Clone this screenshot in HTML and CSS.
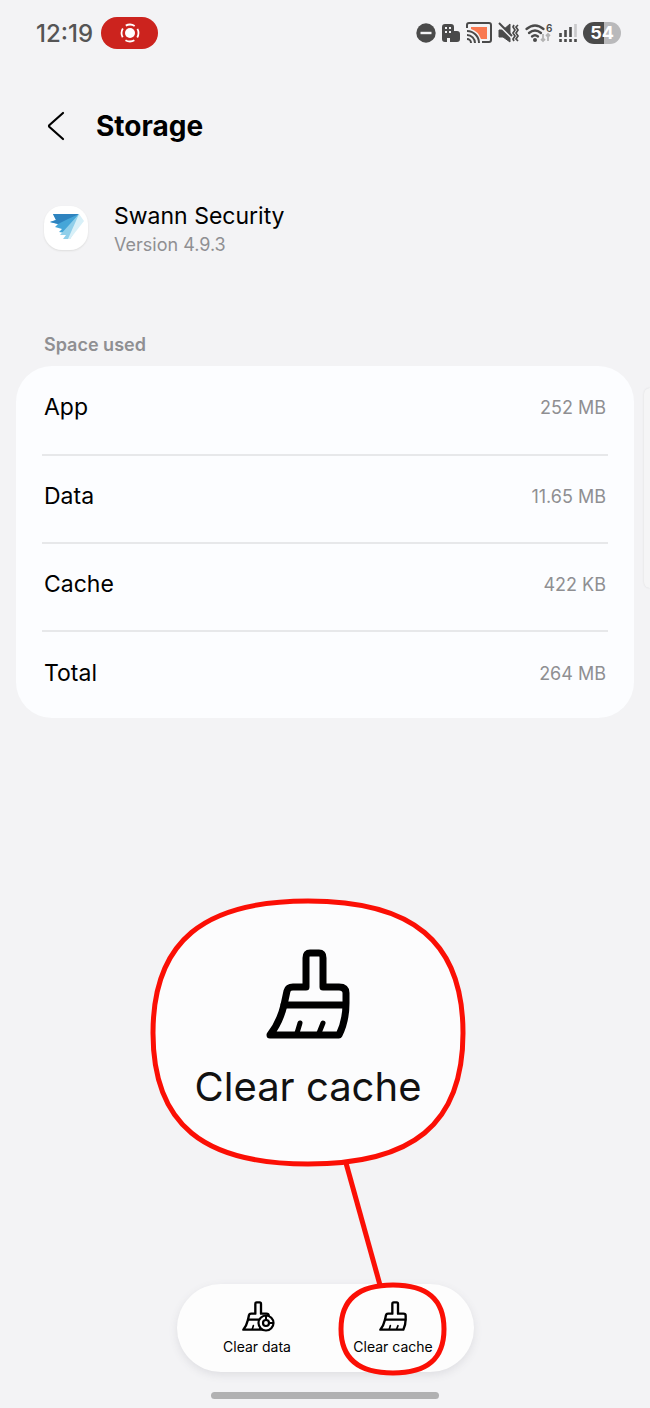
FILE: index.html
```
<!DOCTYPE html>
<html lang="en">
<head>
    <meta charset="UTF-8">
    <meta name="viewport" content="width=device-width, initial-scale=1.0">
    <title>Storage</title>
    <link rel="stylesheet" href="styles.css">
</head>
<body>

    <!-- Shared brush icon -->
    <svg width="0" height="0" class="sprite" aria-hidden="true">
        <symbol id="brush" viewBox="0 0 84 90">
            <g fill="none" stroke="#000" stroke-width="7" stroke-linejoin="round" stroke-linecap="round">
                <path d="M18 56L21 42Q22 38 27 38H40V9Q40 4 44 4H53Q57 4 57 9V38H73Q80 38 80 44V54Q80 72 73 86H4Q14 73 18 56Z"/>
                <path d="M18 56H79"/>
                <path d="M34 74L31 84M57 74L53 84" stroke-width="5"/>
            </g>
        </symbol>
    </svg>

    <header class="status-bar">
        <div class="status-left">
            <span class="time">12:19</span>
            <span class="record">
                <svg width="20" height="20" viewBox="0 0 20 20">
                    <circle cx="10" cy="10" r="5" fill="#fff"/>
                    <circle cx="10" cy="10" r="8.5" fill="none" stroke="#fff" stroke-width="1.8" stroke-dasharray="9.35 4" stroke-dashoffset="4.67"/>
                </svg>
            </span>
        </div>
        <div class="status-right">
            <svg width="20" height="20" viewBox="0 0 20 20">
                <circle cx="10" cy="10" r="9.7" fill="#4a4a4a"/>
                <path d="M4.5 10H15.5" stroke="#f3f3f5" stroke-width="2.4"/>
            </svg>
            <svg width="18" height="20" viewBox="0 0 18 20">
                <path d="M3 1H9Q12 1 12 4V8H15Q18 8 18 11V16Q18 19 15 19H8V15H5V19H3Q0 19 0 16V4Q0 1 3 1Z" fill="#4a4a4a"/>
                <path d="M3 4H5V6H3ZM7 4H9V6H7ZM3 8H5V10H3ZM7 8H9V10H7Z" fill="#f3f3f5"/>
            </svg>
            <svg width="26" height="22" viewBox="0 0 26 22">
                <path d="M5 5H21V17H15Q12 9 5 7Z" fill="#f97850"/>
                <g fill="none" stroke="#4a4a4a" stroke-width="2">
                    <path d="M1 6V3Q1 1 3 1H23Q25 1 25 3V18Q25 20 23 20H16"/>
                    <path d="M1 9A12 12 0 0 1 13 21M1 13A8 8 0 0 1 9 21M1 17A4 4 0 0 1 5 21"/>
                </g>
            </svg>
            <svg width="21" height="20" viewBox="0 0 21 20">
                <path d="M1 7H5L12 1V19L5 14H1Z" fill="#4a4a4a" stroke="#4a4a4a" stroke-linejoin="round"/>
                <path d="M0 1L14 15" stroke="#f3f3f5" stroke-width="2"/>
                <path d="M1 0L14 13" stroke="#4a4a4a" stroke-width="2"/>
                <path d="M16 2L15 4L17 7L15 10L17 13L15 16L16 18M20 2L18 4L20 7L18 10L20 13L18 16L20 18" fill="none" stroke="#4a4a4a" stroke-width="1.7"/>
            </svg>
            <svg width="28" height="20" viewBox="0 0 28 20">
                <g fill="none" stroke="#4a4a4a" stroke-width="2.3" stroke-linecap="round">
                    <path d="M1.500 6Q10 -1 18.500 6M4 10Q10 5 16 10M7 13.500Q10 11 13 13.500"/>
                </g>
                <circle cx="10" cy="17" r="2" fill="#4a4a4a"/>
                <path d="M18 11V18M16 16L18 18L20 16M23 18V11M21 13L23 11L25 13" fill="none" stroke="#b4b4b4" stroke-width="1.8"/>
                <text x="21" y="9" class="wifi-gen">6</text>
            </svg>
            <svg width="18" height="20" viewBox="0 0 18 20">
                <path d="M1.500 10V14M6.500 7V14M11.500 4V14M1.500 16V19M6.500 16V19M11.500 16V19M16.500 16V19" stroke="#4a4a4a" stroke-width="2.6"/>
                <path d="M16.500 1V14" stroke="#c9c9cb" stroke-width="2.6"/>
            </svg>
            <span class="battery">54</span>
        </div>
    </header>

    <nav class="title-bar">
        <button class="back-btn" aria-label="Back">
            <svg width="18" height="30" viewBox="0 0 18 30">
                <path d="M16 2L2.500 14Q1.500 15 2.500 16L16 28" fill="none" stroke="#000" stroke-width="2.2" stroke-linecap="round" stroke-linejoin="round"/>
            </svg>
        </button>
        <h1>Storage</h1>
    </nav>

    <section class="app-info">
        <div class="app-icon">
            <svg width="36" height="30" viewBox="0 0 36 30">
                <path d="M5 1H31L17 20L11 19L14 16L7 14L10 11L2 9L8 7Z" fill="#45a6d8"/>
                <path d="M5 1H31L20 6L10 11L2 9L8 7Z" fill="#2e83bf"/>
                <path d="M31 1L12 22L18 22L15 26L22 26L32 10Z" fill="#90cfea"/>
                <path d="M31 1L20 26H22L36 8Z" fill="#d8f0f8"/>
            </svg>
        </div>
        <div>
            <div class="app-name">Swann Security</div>
            <div class="app-version">Version 4.9.3</div>
        </div>
    </section>

    <main>
        <h2>Space used</h2>
        <dl class="card">
            <div class="row"><dt>App</dt><dd>252 MB</dd></div>
            <div class="row"><dt>Data</dt><dd>11.65 MB</dd></div>
            <div class="row"><dt>Cache</dt><dd>422 KB</dd></div>
            <div class="row"><dt>Total</dt><dd>264 MB</dd></div>
        </dl>
    </main>
    <div class="edge-handle"></div>

    <footer>
        <div class="actions">
            <button class="action">
                <svg width="32" height="32" viewBox="0 0 32 32">
                    <use href="#brush" x="1" y="1" width="28" height="30"/>
                    <circle cx="25" cy="23" r="7.5" fill="#fdfdfd" stroke="#000" stroke-width="2.2"/>
                    <circle cx="25" cy="23" r="3" fill="none" stroke="#000" stroke-width="2.2"/>
                    <path d="M25 16V20M28 23H32" stroke="#000" stroke-width="2"/>
                </svg>
                Clear data
            </button>
            <div class="highlighted">
                <button class="action">
                    <svg width="32" height="32" viewBox="0 0 32 32">
                        <use href="#brush" x="2" y="1" width="28" height="30"/>
                    </svg>
                    Clear cache
                </button>
                <!-- Magnified callout -->
                <div class="callout">
                    <svg class="callout-lines" width="316" height="478" viewBox="0 0 316 478">
                        <g fill="none" stroke="#fb0f05" stroke-width="5">
                            <path d="M158 3C262 3 313 43 313 135S262 266 158 266S3 227 3 135S54 3 158 3Z" fill="#fcfcfd"/>
                            <path d="M196 265L230 387"/>
                            <path d="M243 387C277 387 294 401 294 431S277 475 243 475S191 461 191 431S209 387 243 387Z"/>
                        </g>
                    </svg>
                    <div class="callout-content">
                        <svg width="84" height="90"><use href="#brush"/></svg>
                        <span>Clear cache</span>
                    </div>
                </div>
            </div>
        </div>
        <div class="home-bar"></div>
    </footer>

</body>
</html>
```
FILE: styles.css
```
* {
    box-sizing: border-box;
}

body {
    font-family: Inter, sans-serif;
    display: flex;
    flex-direction: column;
    min-height: 100vh;
    margin: 0;
    position: relative;
    background-color: #f3f3f5;
    color: #000;
}

h1, h2, dl, dd {
    margin: 0;
}

button {
    font-family: inherit;
    color: inherit;
    border: none;
    padding: 0;
    background: none;
    cursor: pointer;
}

svg {
    display: block;
    flex-shrink: 0;
    overflow: visible;
}

.sprite {
    position: absolute;
}

.status-bar {
    display: flex;
    justify-content: space-between;
    align-items: center;
    height: 66px;
    padding: 0 29px 0 36px;
}

.status-left {
    display: flex;
    align-items: center;
    gap: 8px;
}

.time {
    font-size: 24px;
    font-weight: 500;
    color: #555;
}

.record {
    display: flex;
    justify-content: center;
    align-items: center;
    width: 57px;
    height: 32px;
    border-radius: 16px;
    background-color: #cc231e;
}

.status-right {
    display: flex;
    align-items: center;
    gap: 6px;
}

.wifi-gen {
    font-size: 10px;
    font-weight: 600;
    fill: #4a4a4a;
}

.battery {
    width: 38px;
    height: 22px;
    border-radius: 11px;
    background: linear-gradient(to right, #4a4a4a 54%, #b9b9bb 54%);
    color: #fff;
    font-size: 18px;
    font-weight: 700;
    line-height: 22px;
    text-align: center;
}

.title-bar {
    display: flex;
    align-items: center;
    gap: 31px;
    height: 120px;
    padding: 0 47px;
}

h1 {
    font-size: 28px;
    font-weight: 700;
}

.app-info {
    display: flex;
    align-items: center;
    gap: 26px;
    height: 86px;
    padding: 0 44px;
}

.app-icon {
    display: flex;
    justify-content: center;
    align-items: center;
    width: 44px;
    height: 44px;
    margin-bottom: 2px;
    border-radius: 18px;
    background-color: #fff;
    box-shadow: 0 1px 2px #ddd;
}

.app-name {
    font-size: 23px;
    line-height: 32px;
}

.app-version {
    font-size: 18px;
    line-height: 26px;
    color: #8f8f92;
}

main {
    padding: 60px 16px 0;
}

h2 {
    padding-left: 28px;
    font-size: 18px;
    font-weight: 600;
    line-height: 26px;
    color: #8f8f92;
}

.card {
    margin-top: 8px;
    padding: 0 26px;
    border-radius: 36px;
    background-color: #fcfdff;
}

.row {
    display: flex;
    justify-content: space-between;
    align-items: center;
    height: 88px;
    padding: 0 2px 6px;
    border-bottom: 2px solid #e7e8ea;
}

.row:first-child {
    height: 90px;
}

.row:last-child {
    height: 86px;
    padding-bottom: 4px;
    border-bottom: none;
}

dt {
    font-size: 23px;
}

dd {
    font-size: 18px;
    color: #8f8f92;
}

.edge-handle {
    position: absolute;
    top: 388px;
    right: 0;
    width: 6px;
    height: 200px;
    border-radius: 6px 0 0 6px;
    background-color: #f5f5f6;
    box-shadow: 0 0 2px #d8d8da;
}

footer {
    display: flex;
    flex-direction: column;
    align-items: center;
    margin-top: auto;
    padding-bottom: 9px;
}

.actions {
    display: flex;
    justify-content: center;
    gap: 30px;
    width: 297px;
    height: 88px;
    border-radius: 44px;
    background-color: #fdfdfd;
    box-shadow: 0 3px 8px #dedee2;
}

.action {
    display: flex;
    flex-direction: column;
    align-items: center;
    gap: 5px;
    width: 106px;
    padding-top: 16px;
    font-size: 14px;
    line-height: 20px;
}

.highlighted {
    position: relative;
}

.callout {
    position: absolute;
    right: -20px;
    bottom: -4px;
    width: 316px;
    height: 478px;
    pointer-events: none;
}

.callout-lines {
    position: absolute;
}

.callout-content {
    position: relative;
    display: flex;
    flex-direction: column;
    align-items: center;
    gap: 22px;
    padding-top: 51px;
    font-size: 40px;
    line-height: 52px;
    color: #111;
}

.home-bar {
    width: 228px;
    height: 7px;
    margin-top: 20px;
    border-radius: 4px;
    background-color: #b1b1b2;
}
```
